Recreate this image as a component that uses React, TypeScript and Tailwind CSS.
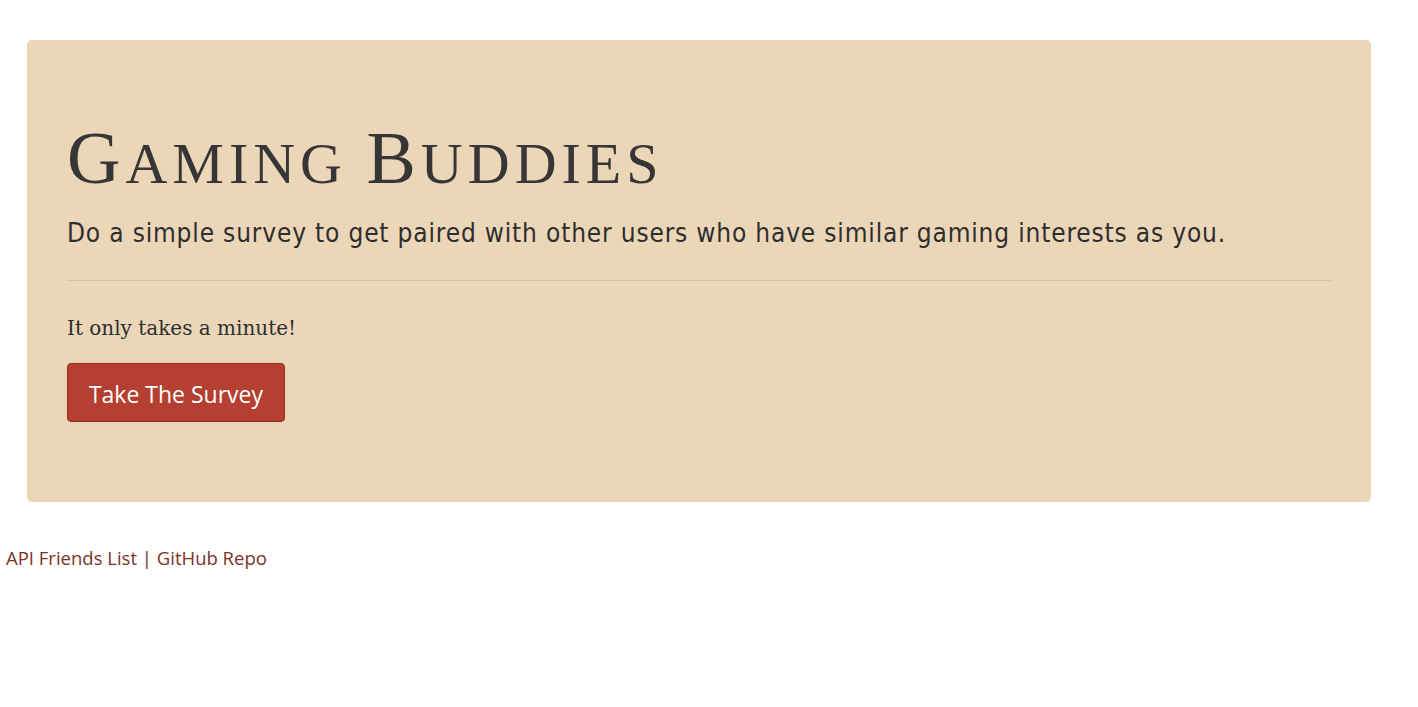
export default function App() {
  return (
    <div className="min-h-[707px] bg-white">
      <div className="pt-[40px] pl-[27px]">
        <div className="w-[1344px] rounded-[5px] bg-[#ecd6b8] px-[40px] pt-[80px] pb-[80px]">
          <h1 className="font-['Liberation_Serif',serif] text-[58px] leading-[77px] text-[#363636] uppercase tracking-[5px]">
            <span className="text-[74px]">G</span>aming <span className="text-[74px]">B</span>uddies
          </h1>
          <p className="mt-[16px] font-['Liberation_Sans_Narrow','DejaVu_Sans_Condensed',sans-serif] text-[26px] leading-[1.2] tracking-[0.83px] text-[#2e2e2e]">
            Do a simple survey to get paired with other users who have similar gaming interests as you.
          </p>
          <hr className="mt-[31px] mb-[32px] border-0 border-t border-[#d6c1a3]" />
          <p className="font-['DejaVu_Serif',serif] text-[20px] leading-[1.5] text-[#2e2e2e]">
            It only takes a minute!
          </p>
          <button className="mt-[20px] flex h-[59px] w-[218px] items-center justify-center rounded-[4px] border border-[#8f2d22] bg-[#b54032] pt-[3px] font-['Open_Sans',sans-serif] text-[23px] text-white">
            Take The Survey
          </button>
        </div>
      </div>
      <div className="mt-[42px] pl-[6px] font-['Open_Sans',sans-serif] text-[18.5px] text-[#7b3329]">
        <a>API Friends List</a> | <a>GitHub Repo</a>
      </div>
    </div>
  );
}
